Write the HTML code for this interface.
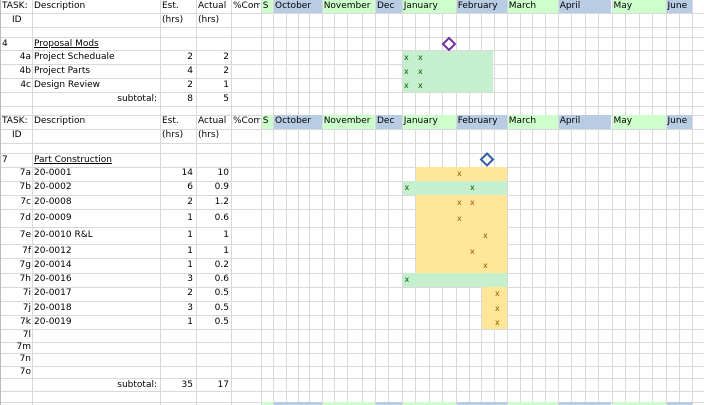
<!DOCTYPE html>
<html><head><meta charset="utf-8"><style>
html,body{margin:0;padding:0;background:#fff;}
#c{position:relative;width:704px;height:405px;overflow:hidden;font-family:"DejaVu Sans","Liberation Sans",sans-serif;font-size:9px;color:#000;}
.h{position:absolute;left:0;width:704px;height:1px;background:#d9d9d9;}
.v{position:absolute;top:0;height:405px;width:1px;background:#d9d9d9;}
.f{position:absolute;}
.t{position:absolute;white-space:nowrap;line-height:13px;}
.r{text-align:right;}
.u{text-decoration:underline;}
.xg{position:absolute;color:#006100;font-size:8px;line-height:13px;}
.xo{position:absolute;color:#9c5700;font-size:8px;line-height:13px;}
</style></head><body><div id="c"></div>
<script>
var c=document.getElementById('c');
function add(cls,st,txt){var d=document.createElement('div');d.className=cls;d.style.cssText=st;if(txt!=null)d.textContent=txt;c.appendChild(d);return d;}
var V=[32,160,196,231,260.7,273,285.7,297.7,309.3,321.7,334,346.7,361.7,375,388,401.7,415.2,428.7,442.2,455.7,468.5,481.2,494,506.7,519.5,532.2,545,557.7,571,584.5,598,611.5,625,638.5,652,665.5,678.5,692];
var H=[13.3,26.7,37.3,50,64,78.3,92.3,106,115,129,142.7,153.3,166.7,180.7,195,209.3,227,244,258.3,272.7,286.7,301,315,329,341.7,353.3,366,378.3,390.7,401.7];
H.forEach(function(y){add('h','top:'+y+'px');});
V.forEach(function(x){add('v','left:'+x+'px');});
add('v','left:0;background:#bbb');
function fill(x1,y1,x2,y2,col){add('f','left:'+x1+'px;top:'+y1+'px;width:'+(x2-x1)+'px;height:'+(y2-y1)+'px;background:'+col);}
var G='#c6efce',B='#b8cce4',O='#ffe699',MG='#ccffcc';
var months=[[260.7,273,MG,'S'],[273,321.7,B,'October'],[321.7,375,MG,'November'],[375,401.7,B,'Dec'],[401.7,455.7,MG,'January'],[455.7,506.7,B,'February'],[506.7,557.7,MG,'March'],[557.7,611.5,B,'April'],[611.5,665.5,MG,'May'],[665.5,692,B,'June']];
[[0,13.3],[115,129],[402,405]].forEach(function(r){months.forEach(function(m){fill(m[0]+1,r[0],m[1],r[1],m[2]);});});
fill(402.7,50.5,493,92.3,G);
fill(416,166.7,506.7,272.7,O);
fill(402.7,180.7,506.7,195,G);
fill(402.7,272.7,506.7,286.7,G);
fill(482,286.7,506.7,329,O);
[[0,13.3],[115,129]].forEach(function(r){
 var y=r[0];
 add('t','left:2px;top:'+y+'px','TASK:');
 add('t','left:34px;top:'+y+'px','Description');
 add('t','left:162px;top:'+y+'px','Est.');
 add('t','left:198px;top:'+y+'px','Actual');
 add('t','left:233px;top:'+y+'px;width:27px;overflow:hidden','%Complete');
 months.forEach(function(m){add('t','left:'+(m[0]+2)+'px;top:'+y+'px',m[3]);});
 var y2=y+13.5;
 add('t','left:12px;top:'+y2+'px','ID');
 add('t','left:162px;top:'+y2+'px','(hrs)');
 add('t','left:198px;top:'+y2+'px','(hrs)');
});
function row(y,id,desc,e,a,ul){
 if(id)add('t r','left:0;width:31px;top:'+y+'px',id);
 if(desc)add('t'+(ul?' u':''),'left:34px;top:'+y+'px',desc);
 if(e!=null)add('t r','left:160px;width:33px;top:'+y+'px',e);
 if(a!=null)add('t r','left:196px;width:33px;top:'+y+'px',a);
}
add('t','left:2px;top:37.5px','4');
row(37.5,null,'Proposal Mods',null,null,1);
row(51,'4a','Project Scheduale','2','2');
row(65,'4b','Project Parts','4','2');
row(79,'4c','Design Review','2','1');
add('t r','left:100px;width:57px;top:93px','subtotal:');
row(93,null,null,'8','5');
add('t','left:2px;top:153.5px','7');
row(153.5,null,'Part Construction',null,null,1);
var L=[['7a','20-0001','14','10',166.7,180.7],['7b','20-0002','6','0.9',180.7,195],['7c','20-0008','2','1.2',195,209.3],['7d','20-0009','1','0.6',209.3,227],['7e','20-0010 R&L','1','1',227,244],['7f','20-0012','1','1',244,258.3],['7g','20-0014','1','0.2',258.3,272.7],['7h','20-0016','3','0.6',272.7,286.7],['7i','20-0017','2','0.5',286.7,301],['7j','20-0018','3','0.5',301,315],['7k','20-0019','1','0.5',315,329],['7l',null,null,null,329,341.7],['7m',null,null,null,341.7,353.3],['7n',null,null,null,353.3,366],['7o',null,null,null,366,378.3]];
L.forEach(function(r){var y=(r[4]+r[5])/2-6.5;row(y,r[0],r[1],r[2],r[3]);});
add('t r','left:100px;width:57px;top:378.5px','subtotal:');
row(378.5,null,null,'35','17');
function xm(cls,x,y){add(cls,'left:'+x+'px;top:'+y+'px','x');}
[51,65,79].forEach(function(y){xm('xg',404,y);xm('xg',418,y);});
function cy(i){return (L[i][4]+L[i][5])/2-6.5;}
xm('xo',457,cy(0));
xm('xg',404.5,cy(1));xm('xg',470,cy(1));
xm('xo',457,cy(2));xm('xo',470,cy(2));
xm('xo',457,cy(3));
xm('xo',483,cy(4));
xm('xo',470,cy(5));
xm('xo',483,cy(6));
xm('xg',404.5,cy(7));
xm('xo',495,cy(8));xm('xo',495,cy(9));xm('xo',495,cy(10));
</script>
<svg style="position:absolute;left:0;top:0" width="704" height="405">
<polygon points="449,38 455,44 449,50 443,44" fill="none" stroke="#7030a0" stroke-width="2"/>
<polygon points="487,153.5 493,159.5 487,165.5 481,159.5" fill="none" stroke="#2f5ea8" stroke-width="2"/>
</svg>
</body></html>
